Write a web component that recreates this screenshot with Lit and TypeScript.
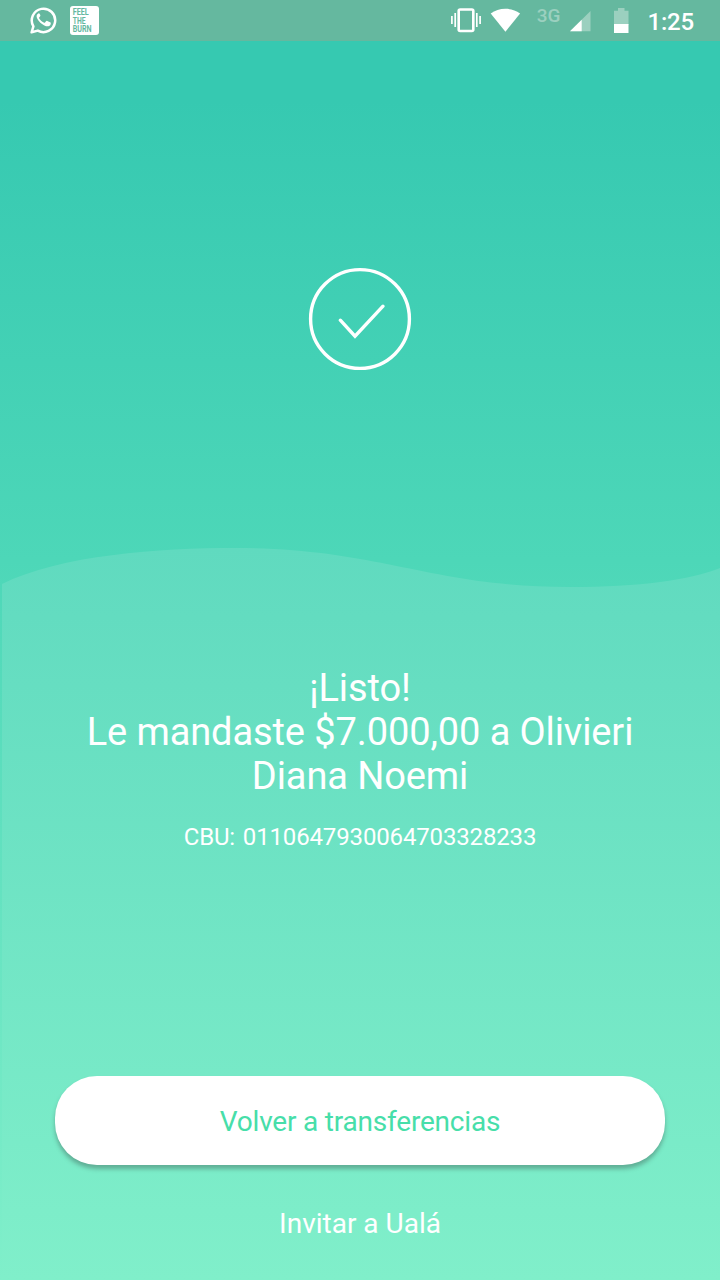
import { LitElement, html, css } from "lit";
import { customElement } from "lit/decorators.js";

@customElement("status-bar")
class StatusBar extends LitElement {
  static styles = css`
    :host {
      display: flex;
      justify-content: space-between;
      height: 41px;
      box-sizing: border-box;
      background: #65b89f;
      color: #fff;
      font-family: Roboto, sans-serif;
    }
    svg { display: block; }
    .side { display: flex; }
    .left { padding: 6px 0 0 29px; gap: 12px; }
    .right { padding-right: 26px; }
    .vibrate { margin-top: 6px; }
    .wifi { margin: 8px 0 0 8px; }
    .network {
      margin: 5px 0 0 14px;
      width: 28px;
      font-size: 19px;
      line-height: 21px;
      font-weight: 500;
      color: #9bd0bf;
    }
    .signal { margin: 11px 0 0 7px; }
    .battery { margin: 8px 0 0 23px; }
    .clock {
      margin-left: 19px;
      font-size: 24px;
      line-height: 44px;
      font-weight: 500;
      letter-spacing: -0.2px;
    }
  `;

  render() {
    return html`
      <div class="side left">
        <svg width="29" height="29" viewBox="0 0 29 29">
          <path d="M2.6 26.3 L4.4 20.3 A11.7 11.7 0 1 1 8.8 24.6 Z" fill="none" stroke="#fff" stroke-width="2.5" stroke-linejoin="round" />
          <path d="M10.3 7.8c-.5-1-1-.9-1.6-.8-1 .4-1.9 1.6-1.9 3.1 0 1.8 1.3 3.6 2.4 5 2 2.5 4.5 4.5 7.6 5.5 2.4.7 4.7-.5 5-2.4.2-1.1.1-1.3-.6-1.7l-3-1.4c-.6-.3-1-.1-1.4.4l-1 1.2c-.4.4-.8.4-1.4.1-2-.8-3.9-2.6-4.9-4.5-.3-.5-.1-.9.3-1.3l.8-1c.3-.4.3-.7.1-1.2z" fill="#fff" transform="translate(1.2 .8) scale(.94)" />
        </svg>
        <svg width="29" height="29" viewBox="0 0 29 29">
          <rect width="29" height="29" rx="3" fill="#fff" />
          <g fill="#65b89f" font-family="Roboto, sans-serif" font-weight="700" font-size="8.6">
            <text x="2.7" y="9.3" textLength="16" lengthAdjust="spacingAndGlyphs">FEEL</text>
            <text x="2.7" y="17.7" textLength="12.8" lengthAdjust="spacingAndGlyphs">THE</text>
            <text x="2.7" y="26" textLength="18.8" lengthAdjust="spacingAndGlyphs">BURN</text>
          </g>
        </svg>
      </div>
      <div class="side right">
        <svg class="vibrate" width="32" height="28" viewBox="0 0 32 28">
          <rect x="8.7" y="3.5" width="14.6" height="21.5" rx="1.5" fill="none" stroke="#fff" stroke-width="2.6" />
          <path d="M5.2 7v14M1.9 10v8M26.8 7v14M30.1 10v8" stroke="#fff" stroke-width="1.7" />
        </svg>
        <svg class="wifi" width="31" height="25" viewBox="0 0 31 25">
          <path d="M.7 5.6C5 2.4 9.8.8 15.4.8s10.4 1.6 14.7 4.8L15.4 23.8Z" fill="#fff" />
        </svg>
        <span class="network">3G</span>
        <svg class="signal" width="21" height="21" viewBox="0 0 21 21">
          <path d="M0 20.3 20.5 0v20.3Z" fill="#9bd0bf" />
          <path d="M0 20.3 11.7 8.7v11.6Z" fill="#fff" />
        </svg>
        <svg class="battery" width="15" height="25" viewBox="0 0 15 25">
          <path d="M0 2.7h4V0h6.5v2.7h4V17H0Z" fill="#9bd0bf" />
          <path d="M0 16h14.5v9H0Z" fill="#fff" />
        </svg>
        <span class="clock">1:25</span>
      </div>
    `;
  }
}

@customElement("app-root")
class AppRoot extends LitElement {
  static styles = css`
    :host {
      display: flex;
      flex-direction: column;
      position: relative;
      height: 1280px;
      overflow: hidden;
      background: linear-gradient(#36c9b1 100px, #4dd7b8 560px, #80efca 1280px);
      color: #fff;
      font-family: Roboto, sans-serif;
      text-align: center;
    }
    .wave {
      position: absolute;
      inset: 0;
      z-index: 0;
    }
    status-bar, main { position: relative; z-index: 1; }
    main {
      flex: 1;
      display: flex;
      flex-direction: column;
      align-items: center;
    }
    .check { display: block; margin-top: 226px; }
    h1 {
      margin: 295px 0 0;
      font-size: 38px;
      line-height: 44px;
      font-weight: 400;
      letter-spacing: -0.1px;
    }
    .title-line { display: block; }
    .cbu {
      margin: 25px 0 0;
      font-size: 24px;
      line-height: 28px;
      letter-spacing: -0.15px;
      word-spacing: 2px;
    }
    button {
      border: 0;
      padding: 0;
      font: inherit;
      font-size: 28px;
    }
    .primary {
      width: 610px;
      height: 89px;
      margin-top: 225px;
      padding-top: 2px;
      border-radius: 42px;
      background: #fff;
      color: #47dea9;
      letter-spacing: -0.2px;
      box-shadow: 0 4px 4px rgba(60, 90, 80, 0.42);
    }
    .invite {
      margin-top: 42px;
      line-height: 33px;
      background: none;
      color: #fff;
    }
  `;

  render() {
    return html`
      <svg class="wave" width="720" height="1280" viewBox="0 0 720 1280">
        <defs>
          <linearGradient id="fill" x1="0" y1="548" x2="0" y2="1280" gradientUnits="userSpaceOnUse">
            <stop offset="0" stop-color="#60dabf" />
            <stop offset="1" stop-color="#80efca" />
          </linearGradient>
        </defs>
        <path d="M2 584C60 555 160 548 235 548C380 548 430 587 570 587C640 587 690 580 720 568V1280H2Z" fill="url(#fill)" />
      </svg>
      <status-bar></status-bar>
      <main>
        <svg class="check" width="104" height="104" viewBox="0 0 104 104" fill="none" stroke="#fff" stroke-width="3.4">
          <circle cx="52" cy="52" r="49.4" />
          <path d="M32.3 53.2 47 69.2 75 39.2" stroke-linecap="round" />
        </svg>
        <h1>
          <span class="title-line">¡Listo!</span>
          <span class="title-line">Le mandaste $7.000,00 a Olivieri</span>
          <span class="title-line">Diana Noemi</span>
        </h1>
        <p class="cbu">CBU: 0110647930064703328233</p>
        <button class="primary">Volver a transferencias</button>
        <button class="invite">Invitar a Ualá</button>
      </main>
    `;
  }
}
